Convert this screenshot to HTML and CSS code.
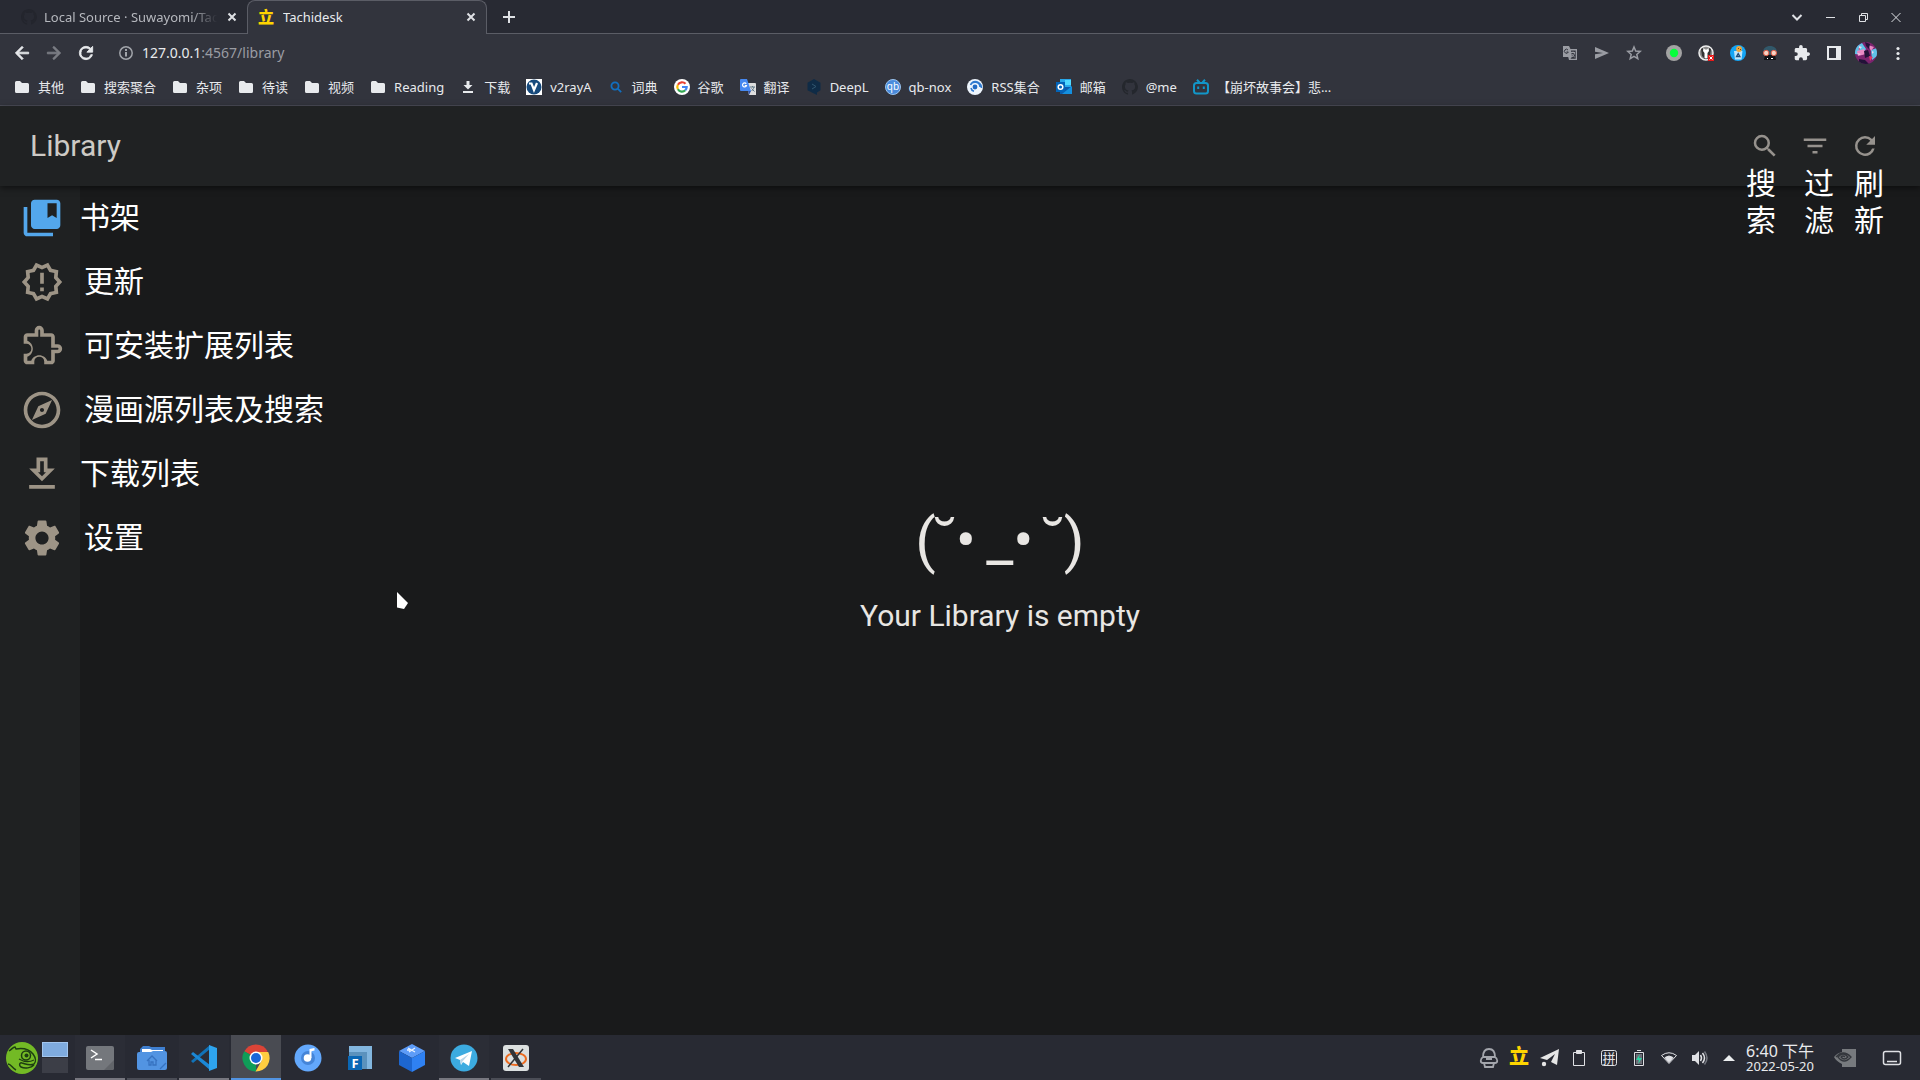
FILE: index.html
```html
<!DOCTYPE html>
<html lang="zh-CN">
<head>
<meta charset="utf-8">
<title>Tachidesk</title>
<link rel="stylesheet" href="styles.css">
</head>
<body>
<header class="browser">
  <div class="tabstrip">
    <div class="tab tab-idle">
      <svg class="i16" viewBox="0 0 16 16" fill="#23252d"><path d="M8 0C3.580 0 0 3.580 0 8c0 3.540 2.290 6.530 5.470 7.590.4.070.55-.17.55-.38v-1.500c-2.200.5-2.700-.94-2.700-.94-.4-.9-.9-1.200-.9-1.200-.7-.5.1-.5.1-.5.8.1 1.200.8 1.200.8.7 1.200 1.900.9 2.300.7.1-.5.3-.9.5-1.100-1.800-.2-3.600-.9-3.600-3.900 0-.9.3-1.600.8-2.200-.1-.2-.4-1 .1-2.100 0 0 .7-.2 2.200.8a7.600 7.600 0 0 1 4 0c1.500-1 2.200-.8 2.200-.8.4 1.100.2 1.900.1 2.100.5.6.8 1.300.8 2.200 0 3.100-1.900 3.700-3.700 3.900.3.300.6.8.6 1.500v2.200c0 .2.1.5.5.4A8 8 0 0 0 8 0z"/></svg>
      <span class="tab-title fade">Local Source · Suwayomi/Tachidesk</span>
      <button class="icon-btn" aria-label="Close tab"><svg class="i16" viewBox="0 0 16 16"><path class="line" d="M4.500 4.500l7 7M11.500 4.500l-7 7"/></svg></button>
    </div>
    <div class="tab tab-active">
      <span class="favicon-li">立</span>
      <span class="tab-title">Tachidesk</span>
      <button class="icon-btn" aria-label="Close tab"><svg class="i16" viewBox="0 0 16 16"><path class="line" d="M4.500 4.500l7 7M11.500 4.500l-7 7"/></svg></button>
    </div>
    <button class="icon-btn new-tab" aria-label="New tab"><svg class="i16" viewBox="0 0 16 16"><path class="line" d="M8 2v12M2 8h12"/></svg></button>
    <div class="window-controls">
      <button class="icon-btn" aria-label="Search tabs"><svg class="i16" viewBox="0 0 16 16"><path class="line" d="M3.500 6l4.500 4.500L12.500 6"/></svg></button>
      <button class="icon-btn" aria-label="Minimize"><svg class="i16" viewBox="0 0 16 16"><path class="thin" d="M4 8.500h9"/></svg></button>
      <button class="icon-btn" aria-label="Restore"><svg class="i16" viewBox="0 0 16 16"><path class="thin" d="M4.500 6.500h6v6h-6zM6.500 6V4.500h6v6H11"/></svg></button>
      <button class="icon-btn" aria-label="Close"><svg class="i16" viewBox="0 0 16 16"><path class="thin" d="M3.500 4l9 9M12.500 4l-9 9"/></svg></button>
    </div>
  </div>
  <div class="toolbar">
    <div class="tools">
      <button class="icon-btn" aria-label="Back"><svg class="i20" viewBox="0 0 24 24" fill="#e8eaed" stroke="#e8eaed"><path d="M20 11H7.830l5.590-5.590L12 4l-8 8 8 8 1.410-1.410L7.830 13H20z"/></svg></button>
      <button class="icon-btn" aria-label="Forward"><svg class="i20" viewBox="0 0 24 24" fill="#7c7e85" stroke="#7c7e85"><path d="M12 4l-1.410 1.410L16.170 11H4v2h12.170l-5.580 5.590L12 20l8-8z"/></svg></button>
      <button class="icon-btn" aria-label="Reload"><svg class="i20" viewBox="0 0 24 24" fill="#e8eaed" stroke="#e8eaed"><path d="M17.650 6.350A7.960 7.960 0 0 0 12 4a8 8 0 1 0 7.730 10h-2.080A6 6 0 1 1 12 6c1.660 0 3.140.69 4.220 1.780L13 11h7V4l-2.350 2.350z"/></svg></button>
    </div>
    <div class="address">
      <svg class="i16" viewBox="0 0 16 16" fill="none" stroke="#a2a5ab" stroke-width="1.500"><circle cx="8" cy="8" r="6.200"/><path stroke-width="2" d="M8 7v4.500M8 4v2"/></svg>
      <div class="url" role="textbox" aria-label="Address" contenteditable="true"><b>127.0.0.1</b>:4567/library</div>
    </div>
    <div class="tools">
      <button class="icon-btn" aria-label="Translate"><svg class="i16" viewBox="0 0 16 16"><path fill="#9a9ca3" d="M1 1h6l1.500 3H15v11H7l-.8-3H1z"/><path fill="#33353e" d="M9 5.500h4.700v8.200H8.500l1.500-2z"/><path fill="none" stroke="#9a9ca3" d="M9 7.500h4M11 6.500v1M12.500 8c-.5 2-1.500 3-2.500 4M10 9c.6 1.500 1.500 2.300 2.700 3"/><path fill="none" stroke="#33353e" d="M6 5a2 2 0 1 0 .3 2H4.500"/></svg></button>
      <button class="icon-btn" aria-label="Share"><svg class="i16" viewBox="0 0 16 16"><path fill="#9a9ca3" d="M1 2l14 6-14 6V9.300L9 8 1 6.700z"/></svg></button>
      <button class="icon-btn" aria-label="Bookmark"><svg class="i16" viewBox="0 0 16 16"><path fill="none" stroke="#9a9ca3" stroke-width="1.500" d="M8 2l1.700 4 4.500.4-3.400 3 1 4.300L8 11.400l-3.800 2.300 1-4.300-3.400-3 4.500-.4z"/></svg></button>
    </div>
    <div class="tools">
      <button class="icon-btn" aria-label="Status"><svg class="i16" viewBox="0 0 16 16"><circle cx="8" cy="8" r="8" fill="#a3a3a3"/><circle cx="8" cy="8" r="4.200" fill="#06ff3c"/></svg></button>
      <button class="icon-btn" aria-label="Proxy"><svg class="i16" viewBox="0 0 16 16"><circle cx="8" cy="8" r="7" fill="#8a8a8a" stroke="#eee" stroke-width="1.500"/><path fill="#333" d="M3 4l2-1 2 4v7L4 11zM13 4l-2-1-2 4v7l3-3z"/><path fill="#fff" d="M5.500 3l1.500 1.500h2L10.500 3l.5 3-1.500 2v5h-3V8L5 6z"/><path fill="#e81818" d="M10 10h6v6h-6z"/><path stroke="#fff" d="M11.500 11.500l3 3m0-3l-3 3"/></svg></button>
      <button class="icon-btn" aria-label="Cleaner"><svg class="i16" viewBox="0 0 16 16"><circle cx="8" cy="8" r="8" fill="#14a5f5"/><path fill="#bfe6fb" d="M4 6h8.500l-1 8.500h-6.500z"/><circle cx="9" cy="4" r="2.900" fill="#f1a83b"/><path fill="#7a4614" d="M8 3h1v1H8zM10 4h1v1h-1z"/><path fill="none" stroke="#1f4d78" stroke-width="1.300" d="M6.500 11.500l1.700-3 1.700 3z"/></svg></button>
      <button class="icon-btn" aria-label="Mask"><svg class="i16" viewBox="0 0 16 16"><path fill="#31586a" d="M1 8C1 3 4 1 8 1s7 2 7 7l-2 3H3z"/><path fill="#101216" d="M3 10h10l1 5H2z"/><circle cx="4.200" cy="8" r="2.700" fill="#f6d3c4" stroke="#df5843"/><circle cx="11.800" cy="8" r="2.700" fill="#f6d3c4" stroke="#df5843"/><path stroke="#fff" d="M5 13.500h1m3 0h2"/></svg></button>
      <button class="icon-btn" aria-label="Extensions"><svg class="i16" viewBox="1 1 22 22" fill="#e8eaed"><path d="M20.500 11H19V7c0-1.100-.9-2-2-2h-4V3.500a2.500 2.500 0 0 0-5 0V5H4c-1.100 0-2 .9-2 2v3.800h1.500a2.700 2.700 0 0 1 0 5.400H2V20c0 1.100.9 2 2 2h3.800v-1.500a2.700 2.700 0 0 1 5.400 0V22H17c1.100 0 2-.9 2-2v-4h1.500a2.500 2.500 0 0 0 0-5z"/></svg></button>
      <button class="icon-btn" aria-label="Side panel"><svg class="i16" viewBox="0 0 16 16"><path fill="#e8eaed" fill-rule="evenodd" d="M1 1h14v14H1zM3 3v10h7V3z"/></svg></button>
      <button class="icon-btn" aria-label="Profile"><svg class="i22" viewBox="0 0 22 22"><defs><clipPath id="face"><circle cx="11" cy="11" r="11"/></clipPath></defs><g clip-path="url(#face)"><path fill="#7b246f" d="M0 0h22v22H0z"/><path fill="#5fc3e8" d="M0 5l7-4 4 6-4 6-7-1zM16 8l6-2v8l-5 4z"/><path fill="#e989c4" d="M2 9l7-2 2 5-8 2zM13 3l6 2-3 4z"/><path fill="#221238" d="M10 0l5 2-1 5-3-3zM9 9l4-1 2 6-5 2zM4 17l6 1 4 4H4z"/><path fill="#f3d4ef" d="M4 4l3 1-3 3zM17 9l2 1-2 2zM2 11l4 1-2 1z"/><path fill="#e23a68" d="M14 14l4 1-3 4zM3 7l2-1v2z"/></g></svg></button>
      <button class="icon-btn" aria-label="Menu"><svg class="i16" viewBox="0 0 16 16" fill="#e8eaed"><circle cx="8" cy="3.500" r="1.600"/><circle cx="8" cy="8.500" r="1.600"/><circle cx="8" cy="13.500" r="1.600"/></svg></button>
    </div>
  </div>
  <nav class="bookmarks" aria-label="Bookmarks">
    <a href="#"><svg class="i16" viewBox="0 0 16 16"><path class="folder" d="M1 3.500Q1 2 2.500 2H6l2 2h5.500Q15 4 15 5.500v7q0 1.500-1.500 1.500h-11Q1 14 1 12.500z"/></svg>其他</a>
    <a href="#"><svg class="i16" viewBox="0 0 16 16"><path class="folder" d="M1 3.500Q1 2 2.500 2H6l2 2h5.500Q15 4 15 5.500v7q0 1.500-1.500 1.500h-11Q1 14 1 12.500z"/></svg>搜索聚合</a>
    <a href="#"><svg class="i16" viewBox="0 0 16 16"><path class="folder" d="M1 3.500Q1 2 2.500 2H6l2 2h5.500Q15 4 15 5.500v7q0 1.500-1.500 1.500h-11Q1 14 1 12.500z"/></svg>杂项</a>
    <a href="#"><svg class="i16" viewBox="0 0 16 16"><path class="folder" d="M1 3.500Q1 2 2.500 2H6l2 2h5.500Q15 4 15 5.500v7q0 1.500-1.500 1.500h-11Q1 14 1 12.500z"/></svg>待读</a>
    <a href="#"><svg class="i16" viewBox="0 0 16 16"><path class="folder" d="M1 3.500Q1 2 2.500 2H6l2 2h5.500Q15 4 15 5.500v7q0 1.500-1.500 1.500h-11Q1 14 1 12.500z"/></svg>视频</a>
    <a href="#"><svg class="i16" viewBox="0 0 16 16"><path class="folder" d="M1 3.500Q1 2 2.500 2H6l2 2h5.500Q15 4 15 5.500v7q0 1.500-1.500 1.500h-11Q1 14 1 12.500z"/></svg>Reading</a>
    <a href="#"><svg class="i16" viewBox="0 0 16 16"><path class="folder" d="M6.500 2h3v4h3L8 10.500 3.500 6h3zM3 12h10v2H3z"/></svg>下载</a>
    <a href="#"><svg class="i16" viewBox="0 0 16 16"><path fill="#fff" d="M0 0h16v16H0z"/><circle cx="8" cy="8" r="7.500" fill="#174a7c"/><path fill="none" stroke="#fff" stroke-width="2.200" d="M3 4.500h2.500L8 11l3-7"/></svg>v2rayA</a>
    <a href="#"><svg class="i16" viewBox="0 0 16 16" fill="none" stroke="#116fc0" stroke-width="1.800"><circle cx="7" cy="7" r="3.600"/><path d="M9.700 9.700l3.500 3.500"/></svg>词典</a>
    <a href="#"><svg class="i16" viewBox="0 0 16 16" fill="none" stroke-width="2.200"><circle cx="8" cy="8" r="8" fill="#fff"/><path stroke="#ea4335" d="M11.500 4.800A4.700 4.700 0 0 0 3.900 5.700"/><path stroke="#fbbc05" d="M3.900 5.700a4.700 4.700 0 0 0 0 4.600"/><path stroke="#34a853" d="M3.900 10.300a4.700 4.700 0 0 0 7.400 1"/><path stroke="#4285f4" d="M11.300 11.300A4.700 4.700 0 0 0 12.700 8H8"/></svg>谷歌</a>
    <a href="#"><svg class="i16" viewBox="0 0 16 16"><path fill="#dedede" d="M6 4h9q1 0 1 1v11H9z"/><path fill="#4688f1" d="M1 0h6l4 12H1q-1 0-1-1V1q0-1 1-1z"/><path fill="#3151a2" d="M8 12h3l-2 4z"/><path fill="none" stroke="#fff" stroke-width="1.200" d="M6.200 4.800A2 2 0 1 0 6.500 6.500H4.800"/><path fill="none" stroke="#607988" d="M10 8h5M12.500 7v1M14 8c-.5 2-1.500 3-2.500 4M11.500 9.500l3 3"/></svg>翻译</a>
    <a href="#"><svg class="i16" viewBox="0 0 16 16"><path fill="#0f2b46" d="M8 0l6.500 3.700v7.600L11 13.500V16l-3-1.500-6.500-3.200V3.700z"/><path fill="none" stroke="#31566f" d="M6 5l4 2.500L6 10"/></svg>DeepL</a>
    <a href="#"><svg class="i16" viewBox="0 0 16 16"><circle cx="8" cy="8" r="7.500" fill="#4a8bdc" stroke="#9cc4ee"/><text x="8" y="11" font-size="10" text-anchor="middle" fill="#fff">qb</text></svg>qb-nox</a>
    <a href="#"><svg class="i16" viewBox="0 0 16 16" fill="none"><circle cx="8" cy="8" r="8" fill="#eef5fd"/><circle cx="8" cy="8" r="2.400" fill="#236bc4"/><path stroke="#2f7ad0" stroke-width="1.600" d="M3.500 6a5 5 0 0 1 9.500 2M5.500 3a6.500 6.500 0 0 1 9 6M4 9a4 4 0 0 0 3 3.200"/></svg>RSS集合</a>
    <a href="#"><svg class="i16" viewBox="0 0 16 16"><path fill="#28a8ea" d="M4 0h11v9H4z"/><path fill="#50d9ff" d="M9 1h6v5H9z"/><path fill="#0a5cad" d="M4 8h12v7H4z"/><path fill="#1490df" d="M16 7v8H6z"/><path fill="#0364b8" d="M0 3h9v10H0z"/><circle cx="4.500" cy="8" r="2.300" fill="none" stroke="#fff" stroke-width="1.500"/></svg>邮箱</a>
    <a href="#"><svg class="i16" viewBox="0 0 16 16" fill="#24272d"><path d="M8 0C3.580 0 0 3.580 0 8c0 3.540 2.290 6.530 5.470 7.590.4.070.55-.17.55-.38v-1.500c-2.200.5-2.700-.94-2.700-.94-.4-.9-.9-1.200-.9-1.200-.7-.5.1-.5.1-.5.8.1 1.200.8 1.200.8.7 1.200 1.900.9 2.300.7.1-.5.3-.9.5-1.100-1.800-.2-3.600-.9-3.600-3.900 0-.9.3-1.600.8-2.200-.1-.2-.4-1 .1-2.100 0 0 .7-.2 2.200.8a7.600 7.600 0 0 1 4 0c1.500-1 2.200-.8 2.200-.8.4 1.100.2 1.900.1 2.100.5.6.8 1.300.8 2.200 0 3.100-1.900 3.700-3.700 3.900.3.300.6.8.6 1.500v2.200c0 .2.1.5.5.4A8 8 0 0 0 8 0z"/></svg>@me</a>
    <a href="#"><svg class="i16" viewBox="0 0 16 16" fill="none" stroke="#1296c8" stroke-width="2"><rect x="1" y="4" width="14" height="10.500" rx="2.500"/><path d="M4 .8L6.500 3.500M12 .8L9.500 3.500M5.200 7.500v2.500M10.800 7.500v2.500"/></svg>【崩坏故事会】悲...</a>
  </nav>
</header>

<div class="app">
  <header class="appbar">
    <h1>Library</h1>
    <div class="actions">
      <button class="icon-btn" aria-label="搜索"><svg class="i30" viewBox="0 0 24 24"><path d="M15.500 14h-.79l-.28-.27A6.470 6.470 0 0 0 16 9.500 6.500 6.500 0 1 0 9.500 16c1.610 0 3.090-.59 4.230-1.570l.27.28v.79l5 4.990L20.490 19l-4.990-5zm-6 0a4.500 4.500 0 1 1 0-9 4.500 4.500 0 0 1 0 9z"/></svg></button>
      <button class="icon-btn" aria-label="过滤"><svg class="i30" viewBox="0 0 24 24"><path d="M10 18h4v-2h-4v2zM3 6v2h18V6H3zm3 7h12v-2H6v2z"/></svg></button>
      <button class="icon-btn" aria-label="刷新"><svg class="i30" viewBox="0 0 24 24"><path d="M17.650 6.350A7.960 7.960 0 0 0 12 4a8 8 0 1 0 7.730 10h-2.080A6 6 0 1 1 12 6c1.660 0 3.140.69 4.220 1.780L13 11h7V4l-2.350 2.350z"/></svg></button>
    </div>
    <div class="action-notes"><span class="first">搜索</span><span>过滤</span><span>刷新</span></div>
  </header>
  <div class="body">
    <nav class="sidebar" aria-label="Sections">
      <a href="#" class="current"><svg class="i44" viewBox="0 0 24 24"><path d="M4 6H2v14c0 1.100.9 2 2 2h14v-2H4V6z"/><path d="M20 2H8c-1.100 0-2 .9-2 2v12c0 1.100.9 2 2 2h12c1.100 0 2-.9 2-2V4c0-1.100-.9-2-2-2zm0 10l-2.500-1.500L15 12V4h5v8z"/></svg><span>书架</span></a>
      <a href="#"><svg class="i44" viewBox="0 0 24 24"><path d="M23 12l-2.440-2.780.34-3.680-3.610-.82-1.890-3.180L12 3 8.600 1.540 6.710 4.720l-3.610.81.34 3.680L1 12l2.440 2.780-.34 3.690 3.610.82 1.890 3.180L12 21l3.400 1.460 1.890-3.180 3.610-.82-.34-3.680L23 12zm-4.510 2.110l.26 2.790-2.740.62-1.430 2.410L12 18.820l-2.580 1.110-1.430-2.410-2.740-.62.26-2.800L3.660 12l1.850-2.120-.26-2.780 2.740-.61 1.430-2.410L12 5.180l2.580-1.110 1.430 2.410 2.740.62-.26 2.790L20.340 12l-1.850 2.110zM11 15h2v2h-2zm0-8h2v6h-2z"/></svg><span class="inset">更新</span></a>
      <a href="#"><svg class="i44" viewBox="0 0 24 24" fill-rule="evenodd"><path d="M20.500 11H19V7c0-1.100-.9-2-2-2h-4V3.500a2.500 2.500 0 0 0-5 0V5H4c-1.100 0-2 .9-2 2v3.800h1.500a2.700 2.700 0 0 1 0 5.400H2V20c0 1.100.9 2 2 2h3.800v-1.500a2.700 2.700 0 0 1 5.400 0V22H17c1.100 0 2-.9 2-2v-4h1.500a2.500 2.500 0 0 0 0-5zM10.500 3a.5.5 0 0 1 .5.5V7h6v6h3.500a.5.5 0 0 1 0 1H17v6h-2.120c-.68-1.750-2.390-3-4.380-3s-3.700 1.250-4.380 3H4v-2.120c1.750-.68 3-2.390 3-4.380s-1.240-3.700-3-4.380V7h6V3.500a.5.5 0 0 1 .5-.5z"/></svg><span class="inset">可安装扩展列表</span></a>
      <a href="#"><svg class="i44" viewBox="0 0 24 24"><path d="M12 2C6.480 2 2 6.480 2 12s4.480 10 10 10 10-4.480 10-10S17.520 2 12 2zm0 18c-4.410 0-8-3.590-8-8s3.590-8 8-8 8 3.590 8 8-3.590 8-8 8zm-5.500-2.500l7.510-3.490L17.500 6.500 9.990 9.990 6.500 17.500zm5.500-6.600c.61 0 1.100.49 1.100 1.100s-.49 1.100-1.100 1.100-1.100-.49-1.100-1.100.49-1.100 1.100-1.100z"/></svg><span class="inset">漫画源列表及搜索</span></a>
      <a href="#"><svg class="i44" viewBox="0 0 24 24"><path d="M19 9h-4V3H9v6H5l7 7 7-7zm-8 2V5h2v6h1.170L12 13.170 9.830 11H11zm-6 7h14v2H5v-2z"/></svg><span>下载列表</span></a>
      <a href="#"><svg class="i44" viewBox="0 0 24 24"><path d="M19.140 12.940c.04-.3.06-.61.06-.94 0-.32-.02-.64-.07-.94l2.030-1.580c.18-.14.23-.41.12-.61l-1.920-3.320c-.12-.22-.37-.29-.59-.22l-2.390.96c-.5-.38-1.030-.7-1.620-.94l-.36-2.540c-.04-.24-.24-.41-.48-.41h-3.840c-.24 0-.43.17-.47.41l-.36 2.540c-.59.24-1.130.57-1.620.94l-2.390-.96c-.22-.08-.47 0-.59.22L2.740 8.870c-.12.21-.08.47.12.61l2.030 1.580c-.05.3-.09.63-.09.94s.02.64.07.94l-2.030 1.580c-.18.14-.23.41-.12.61l1.920 3.320c.12.22.37.29.59.22l2.390-.96c.5.38 1.030.7 1.620.94l.36 2.540c.05.24.24.41.48.41h3.840c.24 0 .44-.17.47-.41l.36-2.540c.59-.24 1.130-.56 1.620-.94l2.390.96c.22.08.47 0 .59-.22l1.920-3.320c.12-.22.07-.47-.12-.61l-2.010-1.580zM12 15.600c-1.980 0-3.600-1.620-3.600-3.600s1.620-3.600 3.600-3.600 3.600 1.620 3.600 3.600-1.620 3.600-3.600 3.600z"/></svg><span class="inset">设置</span></a>
    </nav>
    <main class="empty">
      <div class="face">(<span class="brow">˘</span>•&#x2006;_•&#x2006;<span class="brow">˘</span>)</div>
      <p>Your Library is empty</p>
    </main>
  </div>
</div>

<footer class="taskbar">
  <button class="icon-btn launcher" aria-label="Start"><svg class="i32" viewBox="0 0 32 32"><circle cx="16" cy="16" r="16" fill="#73ba25"/><path fill="none" stroke="#1d3d12" stroke-width="1.500" d="M3 9c3-2 4-4 6-4l1 2c6-1 13 0 17 5 3 4 3 8 1 10-4 2-8 0-12-1-3-1-3 3-1 4 4 2 10 1 13-2M2 22c3 0 4 4 8 6"/><circle cx="20" cy="13.500" r="4.500" fill="none" stroke="#1d3d12" stroke-width="1.500"/><circle cx="20.500" cy="13.500" r="2" fill="#1d3d12"/><path fill="none" stroke="#1d3d12" stroke-width="1.300" d="M13 17c5 3 11 3 15 1"/></svg></button>
  <div class="pager"><i class="on"></i><i></i></div>
  <div class="tasks">
    <button class="open" aria-label="Terminal"><svg class="i30" viewBox="0 0 30 30"><rect x="1" y="3" width="28" height="24" rx="2" fill="#74777c"/><path fill="#62656a" d="M19 27l10-10v8q0 2-2 2z"/><path fill="none" stroke="#fff" stroke-width="1.500" d="M6 7l6 4-6 4M10 16.500h7"/></svg></button>
    <button class="open dim" aria-label="Files"><svg class="i30" viewBox="0 0 30 30"><path fill="#3f7fd0" d="M3 9V6l3-3h6l2 1h14v6z"/><path fill="#fff" d="M5 6h8l2 1h11v4H5z"/><path fill="#5294e2" d="M2 9h12l2-1h12q2 0 2 2v15q0 2-2 2H2q-2 0-2-2V11q0-2 2-2z"/><path fill="none" stroke="#3672c0" stroke-width="1.300" d="M10 18l5-5 5 5M12 17v5h2v-3h2v3h3v-5M23 26l6-6"/></svg></button>
    <button class="open" aria-label="Code"><svg class="i30" viewBox="0 0 30 30"><path fill="#1173b8" d="M2 18l2 2L21 6V2z"/><path fill="#1b88d6" d="M2 11l2-2 17 13v5z"/><path fill="#2ea4ee" d="M20 2l8 3v20l-8 3z"/></svg></button>
    <button class="open active" aria-label="Chrome"><svg class="i30" viewBox="0 0 30 30"><path fill="#db4437" d="M15 15L3.300 8.200a13.500 13.500 0 0 1 23.400 0z"/><path fill="#0f9d58" d="M15 15l0 13.500A13.500 13.500 0 0 1 3.300 8.200z"/><path fill="#ffcd40" d="M15 9h12.200A13.500 13.500 0 0 1 14.500 28.500L21 17z"/><circle cx="15" cy="15" r="6.500" fill="#fff"/><circle cx="15" cy="15" r="5" fill="#1a66d9"/></svg></button>
    <button aria-label="Music"><svg class="i30" viewBox="0 0 30 30"><circle cx="15" cy="15" r="13.500" fill="#63a8fc"/><circle cx="15" cy="15" r="7" fill="#4585d8"/><circle cx="14.500" cy="15" r="3.800" fill="#fff"/><path fill="#fff" d="M16.500 15V6l5-1v2.500l-3 .8V15z"/></svg></button>
    <button aria-label="Fonts"><svg class="i30" viewBox="0 0 30 30"><path fill="#82b6df" d="M4 3h23v23H4z"/><path fill="#5b92bd" d="M4 9h18v17H4z"/><path fill="#0a67b5" d="M3 13h14v14H3z"/><text x="10" y="25" font-size="13" font-weight="700" text-anchor="middle" fill="#fff">F</text></svg></button>
    <button aria-label="Box"><svg class="i30" viewBox="0 0 30 30"><path fill="#5d9cf8" d="M15 1l13 7-13 7L2 8z"/><path fill="#1d66cf" d="M2 8l13 7v14L2 22z"/><path fill="#2f81f2" d="M28 8l-13 7v14l13-7z"/><path fill="none" stroke="#e9f2ff" stroke-width="1.300" d="M11 5l7 4M18 5l-6 4M10 7h3"/></svg></button>
    <button class="open" aria-label="Telegram"><svg class="i30" viewBox="0 0 30 30"><circle cx="15" cy="15" r="13.500" fill="#3cabe0"/><path fill="#fff" d="M6 15l17-7-3 15-6-4-2 3-1-5z"/><path fill="#b8d5e8" d="M11 17l9-6-7 8-1 3z"/></svg></button>
    <button class="open dim" aria-label="X"><svg class="i30" viewBox="0 0 30 30"><rect x="2" y="2" width="26" height="26" rx="3" fill="#dce0e0"/><ellipse cx="15" cy="16" rx="10" ry="6" fill="none" stroke="#ec6b20" stroke-width="2"/><path fill="#303438" d="M7 6h5l11 18h-5z"/><path stroke="#303438" stroke-width="1.500" d="M22 6L7 24"/></svg></button>
  </div>
  <div class="tray">
    <svg class="i20" viewBox="0 0 20 20" fill="none" stroke="#a4a6ad" stroke-width="1.800"><path d="M4 9c0-5 2-8 6-8s6 3 6 8M4 9h12M7 11h6M4 9c-3 2-3 6 0 6h12c3 0 3-4 0-6M5 15l1 4h8l1-4"/></svg>
    <span class="tray-li">立</span>
    <svg class="i20" viewBox="0 0 20 20" fill="#e6e6e6"><path d="M1 10L20 1l-2 16-6-3 4-8-8 6z"/><circle cx="5" cy="16" r="2.200"/></svg>
    <svg class="i20" viewBox="0 0 20 20" fill="none" stroke="#e0e1e5"><path d="M4.500 4.500h11v13h-11z"/><path fill="#e0e1e5" d="M7.500 5.500v-3h5v3z"/></svg>
    <svg class="i20" viewBox="0 0 20 20"><rect x="2.500" y="2.500" width="15" height="15" rx="2" fill="none" stroke="#e0e1e5"/><text x="10" y="15" font-size="13" text-anchor="middle" fill="#e0e1e5">拼</text></svg>
    <svg class="i20" viewBox="0 0 20 20"><path fill="none" stroke="#e0e1e5" d="M5.500 4.500h9v13h-9zM8 2.500h4"/><path fill="#6c6f78" d="M7 6h6v10H7z"/><path fill="#2bd6a4" d="M11 6l-4 6h3l-1 4 4-6h-3z"/></svg>
    <svg class="i20" viewBox="0 0 20 20" fill="none" stroke="#e0e1e5"><path d="M2.500 7.500Q10 2 17.500 7.500L10 15.500z"/><path fill="#e0e1e5" d="M6 9.500q4-3 8 0l-4 5z"/></svg>
    <svg class="i20" viewBox="0 0 20 20" fill="none" stroke="#e0e1e5" stroke-width="1.500"><path fill="#e0e1e5" stroke="none" d="M3 7h3l4-4v14l-4-4H3z"/><path d="M11.500 7q2 3 0 6M13.500 5q4 5 0 10"/><path stroke="#73767f" d="M15.500 3.500q5 6.500 0 13"/></svg>
    <svg class="i20" viewBox="0 0 20 20" fill="#eceef0"><path d="M4 13l6-6 6 6z"/></svg>
  </div>
  <time class="clock">6:40 下午<small>2022-05-20</small></time>
  <svg class="i24 gpu" viewBox="0 0 24 24" fill="none" stroke="#34373d" stroke-width="1.300"><path fill="#777a7e" stroke="none" d="M9 3h14v18H9v-3Q3 15 1 11q3-4 8-5z"/><path d="M3 11q7-8 15 0-7 8-13 0 5-6 10 0-4 4-7 0 2-2 4 0"/></svg>
  <svg class="i24" viewBox="0 0 24 24" fill="none" stroke="#e0e1e5" stroke-width="1.500"><rect x="3.500" y="5.500" width="17" height="13" rx="2"/><path d="M7 15.500h10"/></svg>
</footer>

<svg class="cursor" viewBox="0 0 12 18"><path fill="#fff" d="M0 0l11 11-4 6-7-1.500z"/></svg>
</body>
</html>
```
FILE: styles.css
```css
* { box-sizing: border-box; }
body {
  margin: 0;
  min-height: 100vh;
  display: flex;
  flex-direction: column;
  background: #191a1b;
  color: #e8eaed;
  font: 13px/18px "Noto Sans", "Noto Sans CJK SC", sans-serif;
}
a { color: inherit; text-decoration: none; }
button { font: inherit; color: inherit; background: none; border: 0; padding: 0; }
svg { display: block; flex: none; }
.i16 { width: 16px; height: 16px; }
.i20 { width: 20px; height: 20px; }
.i22 { width: 22px; height: 22px; }
.i24 { width: 24px; height: 24px; }
.i30 { width: 30px; height: 30px; }
.i32 { width: 32px; height: 32px; }
.i44 { width: 44px; height: 44px; }
.line { fill: none; stroke: #dfe1e5; stroke-width: 2; }
.thin { fill: none; stroke: #dfe1e5; stroke-width: 1; }
.folder { fill: #e8eaed; }
.icon-btn { display: flex; align-items: center; justify-content: center; }

/* browser chrome */
.browser { background: #32343d; border-bottom: 1px solid #4a4c57; }
.tabstrip {
  display: flex;
  height: 34px;
  background: #282a33;
  box-shadow: inset 0 -1px #5b5d66;
}
.tab { display: flex; align-items: center; gap: 9px; width: 240px; padding: 0 7px 2px 10px; }
.tab-idle { width: 247px; gap: 7px; padding: 0 7px 0 21px; color: #b6b8be; }
.tab-active {
  background: #32343d;
  border: 1px solid #5b5d66;
  border-bottom: 0;
  border-radius: 8px 8px 0 0;
}
.tab-title { flex: 1; min-width: 0; overflow: hidden; white-space: nowrap; }
.fade { -webkit-mask-image: linear-gradient(90deg, #000 85%, transparent); mask-image: linear-gradient(90deg, #000 85%, transparent); }
.favicon-li, .tray-li { color: #ffd500; font-weight: 900; font-size: 16px; width: 16px; }
.tray-li { font-size: 20px; width: 20px; }
.new-tab { width: 44px; }
.window-controls { display: flex; margin-left: auto; padding-right: 8px; }
.window-controls .icon-btn { width: 33px; }

.toolbar { display: flex; align-items: center; height: 38px; padding: 0 6px; gap: 8px; }
.tools { display: flex; }
.tools .icon-btn { width: 32px; height: 32px; }
.address { flex: 1; display: flex; align-items: center; gap: 8px; padding-left: 8px; }
.url { color: #9a9ca3; font-size: 14px; line-height: 20px; outline: 0; }
.url b { color: #e8eaed; font-weight: 400; }
.bookmarks { display: flex; height: 33px; padding: 0 6px 3px; overflow: hidden; }
.bookmarks a { display: flex; align-items: center; gap: 8px; padding: 0 8px; white-space: nowrap; }

/* application */
.app { flex: 1; display: flex; flex-direction: column; font-family: Roboto, "Noto Sans CJK SC", sans-serif; }
.appbar {
  position: relative;
  z-index: 1;
  display: flex;
  align-items: center;
  justify-content: space-between;
  height: 80px;
  padding: 0 30px;
  background: #202223;
  box-shadow: 0 2px 6px rgba(0, 0, 0, .5);
}
.appbar h1 { margin: 0; font-size: 30px; line-height: 40px; font-weight: 400; color: #cdcac5; }
.actions { display: flex; fill: #96928d; }
.actions .icon-btn { width: 50px; height: 50px; }
.action-notes {
  position: absolute;
  right: 36px;
  top: 59px;
  display: flex;
  gap: 20px;
  font-size: 30px;
  line-height: 37px;
  color: #fff;
}
.action-notes span { width: 30px; word-break: break-all; }
.action-notes .first { margin-right: 8px; }
.body { flex: 1; display: flex; }
.sidebar { width: 80px; background: #1f2122; fill: #9d9486; }
.sidebar a {
  display: flex;
  align-items: center;
  height: 64px;
  padding-left: 20px;
  gap: 16px;
  color: #fff;
  font-size: 30px;
  line-height: 44px;
  white-space: nowrap;
}
.sidebar .current { fill: #53a7ec; }
.sidebar .inset { padding-left: 4px; }
.empty {
  flex: 1;
  display: flex;
  flex-direction: column;
  align-items: center;
  justify-content: center;
  padding-bottom: 60px;
  color: #e8e6e3;
}
.face { font-size: 60px; line-height: 70px; }
.brow { font-family: "Liberation Sans", sans-serif; }
.empty p { margin: 0; font-size: 30px; line-height: 80px; }

/* desktop panel */
.taskbar { display: flex; align-items: center; height: 45px; padding: 0 16px 0 6px; background: #282a33; }
.pager { display: flex; flex-direction: column; gap: 1px; margin: 0 7px 0 4px; }
.pager i { width: 26px; height: 15px; background: #3c3e47; }
.pager .on { background: #7fabde; border: 1px solid #a3c6ee; }
.tasks { display: flex; gap: 2px; align-self: stretch; }
.tasks button { width: 50px; display: flex; align-items: center; justify-content: center; padding-top: 2px; border-bottom: 2px solid transparent; }
.tasks .open { border-color: #77777f; background: #2b2d36; }
.tasks .dim { border-color: #4b4d56; background: none; }
.tasks .active { border-color: #5294e2; background: #494b52; }
.tray { display: flex; gap: 10px; margin-left: auto; }
.clock { width: 68px; margin: 0 19px 0 7px; text-align: center; font-size: 16px; line-height: 17px; white-space: nowrap; }
.clock small { display: block; font-size: 13px; line-height: 13px; }
.gpu { margin-right: 23px; }
.cursor { position: absolute; left: 397px; top: 592px; width: 12px; height: 18px; }
```
